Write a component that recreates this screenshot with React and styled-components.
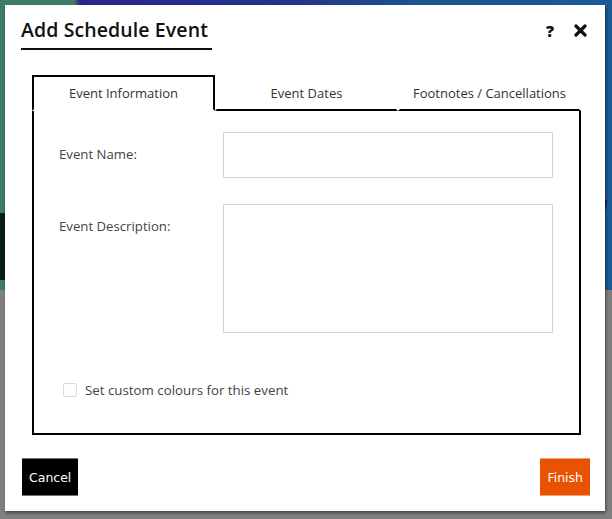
import React, { useState } from "react"
import styled, { createGlobalStyle } from "styled-components"

const GlobalStyle = createGlobalStyle`
  html, body {
    margin: 0;
    padding: 0;
    background: #7f7f7f;
  }
  * {
    box-sizing: border-box;
  }
`

const tabs = ["Event Information", "Event Dates", "Footnotes / Cancellations"]

const App = () => {
  const [active, setActive] = useState(0)
  const [custom, setCustom] = useState(false)
  return (
    <>
      <GlobalStyle />
      <Page>
        <Hero />
        <Shade />
        <Modal>
          <Header>
            <Title>Add Schedule Event</Title>
            <HeaderTools>
              <Help>?</Help>
              <CloseButton aria-label="close">
                <svg width="13" height="13" viewBox="0 0 13 13">
                  <path
                    d="M2 2 L11 11 M11 2 L2 11"
                    stroke="#111"
                    strokeWidth="3.2"
                    strokeLinecap="round"
                  />
                </svg>
              </CloseButton>
            </HeaderTools>
          </Header>

          <TabList>
            {tabs.map((t, i) => (
              <Tab key={t} $active={i === active} onClick={() => setActive(i)}>
                {t}
              </Tab>
            ))}
          </TabList>
          <Panel>
            <FieldRow>
              <Label>Event Name:</Label>
              <TextInput type="text" />
            </FieldRow>
            <FieldRow $gap={26}>
              <Label>Event Description:</Label>
              <TextArea />
            </FieldRow>
            <CheckRow>
              <Check $on={custom} onClick={() => setCustom(!custom)} />
              <CheckLabel>Set custom colours for this event</CheckLabel>
            </CheckRow>
          </Panel>

          <Footer>
            <Button>Cancel</Button>
            <Button $primary>Finish</Button>
          </Footer>
        </Modal>
      </Page>
    </>
  )
}

export default App

const Page = styled.div`
  position: relative;
  width: 612px;
  height: 519px;
  overflow: hidden;
  display: flex;
  flex-direction: column;
`

const Hero = styled.div`
  height: 290px;
  background:
    linear-gradient(#0b1d1c, #0b1d1c) 0 213px / 20px 67px no-repeat,
    linear-gradient(100deg, transparent 0 585px, #0d0d0d 588px, #0d0d0d 596px, transparent 599px) 0 200px / 612px 60px no-repeat,
    linear-gradient(
      90deg,
      #3e7b69 0px,
      #3e7b69 74px,
      #2a2687 80px,
      #23358a 300px,
      #1c5590 420px,
      #1a5b95 100%
    );
`

const Shade = styled.div`
  flex: 1;
  background: #7f7f7f;
`

const Modal = styled.div`
  position: absolute;
  left: 5px;
  top: 5px;
  width: 600px;
  height: 506px;
  background: #fff;
  box-shadow: 1px 2px 3px rgba(0, 0, 0, 0.45);
  display: flex;
  flex-direction: column;
  font-family: "Open Sans", "Liberation Sans", sans-serif;
  color: #333;
`

const Header = styled.div`
  display: flex;
  align-items: flex-start;
  justify-content: space-between;
  padding: 12px 17px 0 16px;
`

const Title = styled.h2`
  margin: 0;
  font-size: 19.5px;
  font-weight: 600;
  letter-spacing: 0.1px;
  line-height: 25px;
  color: #111;
  padding: 0 4px 6px 0;
  border-bottom: 2px solid #111;
`

const HeaderTools = styled.div`
  display: flex;
  align-items: center;
  gap: 20px;
  height: 27px;
  padding-right: 1px;
`

const Help = styled.span`
  font-size: 16px;
  font-weight: 800;
  color: #111;
  line-height: 1;
`

const CloseButton = styled.button`
  display: flex;
  align-items: center;
  padding: 0;
  border: 0;
  background: none;
  cursor: pointer;
`

const TabList = styled.div`
  display: flex;
  margin: 25px 24px 0 27px;
  height: 36px;
`

const Tab = styled.div`
  flex: 1;
  display: flex;
  align-items: center;
  justify-content: center;
  font-size: 13px;
  color: #333;
  cursor: pointer;
  border: 2px solid ${(p) => (p.$active ? "#000" : "transparent")};
  border-bottom: 2px solid ${(p) => (p.$active ? "transparent" : "#000")};
`

const Panel = styled.div`
  margin: 0 24px 0 27px;
  border: 2px solid #000;
  border-top: 0;
  padding: 21px 26px 36px 25px;
  display: flex;
  flex-direction: column;
`

const FieldRow = styled.div`
  display: grid;
  grid-template-columns: 164px 1fr;
  align-items: start;
  margin-top: ${(p) => p.$gap || 0}px;
`

const Label = styled.label`
  padding-top: 13px;
  font-size: 13.2px;
  line-height: 18px;
  color: #444;
`

const TextInput = styled.input`
  height: 46px;
  border: 1px solid #d4d4d4;
  padding: 0 10px;
  font: inherit;
  outline: none;
`

const TextArea = styled.textarea`
  height: 129px;
  border: 1px solid #d4d4d4;
  padding: 8px 10px;
  font: inherit;
  resize: none;
  outline: none;
`

const CheckRow = styled.div`
  display: flex;
  align-items: center;
  gap: 8px;
  margin: 50px 0 0 4px;
  height: 14px;
`

const Check = styled.span`
  width: 14px;
  height: 14px;
  border: 1px solid #d9d9d9;
  border-radius: 2px;
  background: ${(p) => (p.$on ? "#e65100" : "#fff")};
  cursor: pointer;
`

const CheckLabel = styled.span`
  font-size: 13.3px;
  color: #444;
`

const Footer = styled.div`
  display: flex;
  justify-content: space-between;
  align-items: center;
  padding: 23px 15px 0 17px;
`

const Button = styled.button`
  height: 38px;
  padding: 0 7px;
  border: 0;
  border-top: 1px solid rgba(255, 255, 255, 0.45);
  border-bottom: 1px solid rgba(255, 255, 255, 0.45);
  background: ${(p) => (p.$primary ? "#e85200" : "#000")};
  color: #fff;
  font-family: "DejaVu Sans", Verdana, sans-serif;
  font-size: 12.5px;
  cursor: pointer;
`
